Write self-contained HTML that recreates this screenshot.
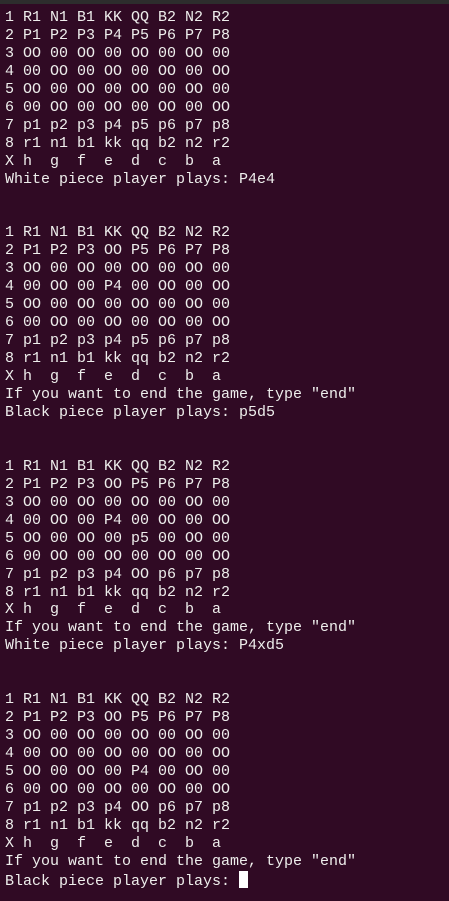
<!DOCTYPE html>
<html><head><meta charset="utf-8"><style>
html,body{margin:0;padding:0;width:449px;height:901px;overflow:hidden;background:#300a24;}
.top{position:absolute;left:0;top:0;width:449px;height:4px;background:#2d2d2d;}
pre{position:absolute;left:5px;top:9px;margin:0;font-family:"Liberation Mono","DejaVu Sans Mono",monospace;font-size:15px;line-height:17.95px;color:#eeeeec;}
.cur{display:inline-block;width:9px;height:17px;background:#fff;vertical-align:-3px;}
</style></head><body><div class="top"></div><pre>1 R1 N1 B1 KK QQ B2 N2 R2
2 P1 P2 P3 P4 P5 P6 P7 P8
3 OO 00 OO 00 OO 00 OO 00
4 00 OO 00 OO 00 OO 00 OO
5 OO 00 OO 00 OO 00 OO 00
6 00 OO 00 OO 00 OO 00 OO
7 p1 p2 p3 p4 p5 p6 p7 p8
8 r1 n1 b1 kk qq b2 n2 r2
X h  g  f  e  d  c  b  a
White piece player plays: P4e4


1 R1 N1 B1 KK QQ B2 N2 R2
2 P1 P2 P3 OO P5 P6 P7 P8
3 OO 00 OO 00 OO 00 OO 00
4 00 OO 00 P4 00 OO 00 OO
5 OO 00 OO 00 OO 00 OO 00
6 00 OO 00 OO 00 OO 00 OO
7 p1 p2 p3 p4 p5 p6 p7 p8
8 r1 n1 b1 kk qq b2 n2 r2
X h  g  f  e  d  c  b  a
If you want to end the game, type "end"
Black piece player plays: p5d5


1 R1 N1 B1 KK QQ B2 N2 R2
2 P1 P2 P3 OO P5 P6 P7 P8
3 OO 00 OO 00 OO 00 OO 00
4 00 OO 00 P4 00 OO 00 OO
5 OO 00 OO 00 p5 00 OO 00
6 00 OO 00 OO 00 OO 00 OO
7 p1 p2 p3 p4 OO p6 p7 p8
8 r1 n1 b1 kk qq b2 n2 r2
X h  g  f  e  d  c  b  a
If you want to end the game, type "end"
White piece player plays: P4xd5


1 R1 N1 B1 KK QQ B2 N2 R2
2 P1 P2 P3 OO P5 P6 P7 P8
3 OO 00 OO 00 OO 00 OO 00
4 00 OO 00 OO 00 OO 00 OO
5 OO 00 OO 00 P4 00 OO 00
6 00 OO 00 OO 00 OO 00 OO
7 p1 p2 p3 p4 OO p6 p7 p8
8 r1 n1 b1 kk qq b2 n2 r2
X h  g  f  e  d  c  b  a
If you want to end the game, type "end"
Black piece player plays: <span class="cur"></span></pre></body></html>
